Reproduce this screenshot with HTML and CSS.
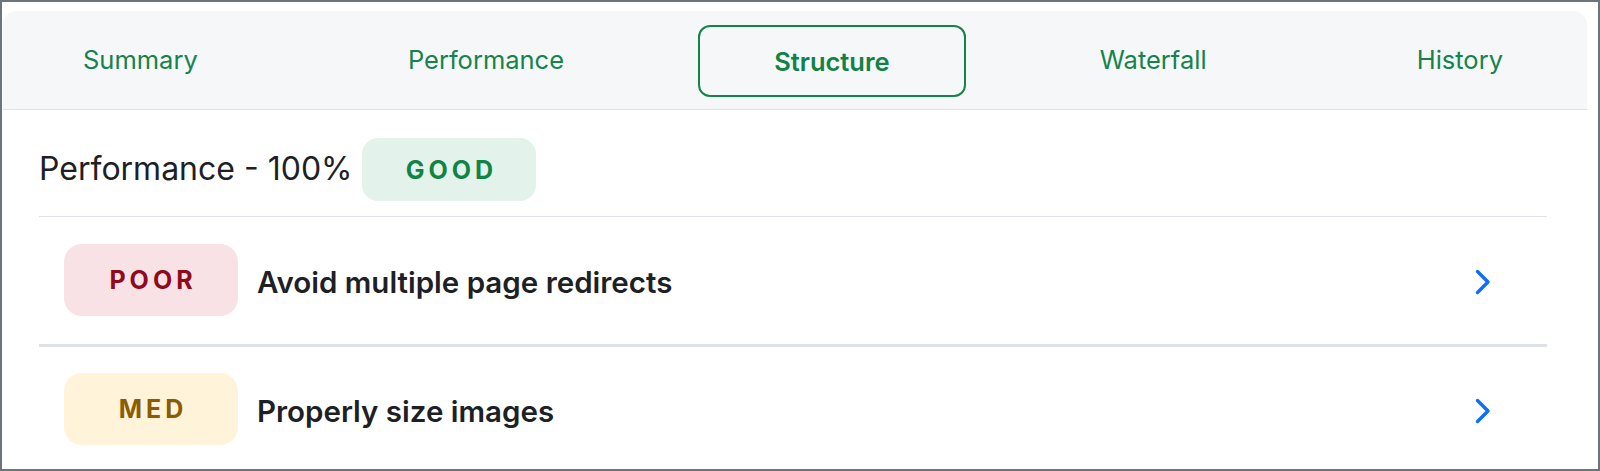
FILE: index.html
```html
<!DOCTYPE html>
<html lang="en">
<head>
<meta charset="utf-8">
<title>Structure</title>
<link rel="stylesheet" href="styles.css">
</head>
<body>
<div class="window">
  <nav class="tabs">
    <a class="tab">Summary</a>
    <a class="tab">Performance</a>
    <a class="tab active">Structure</a>
    <a class="tab">Waterfall</a>
    <a class="tab">History</a>
  </nav>
  <section class="content">
    <div class="heading">
      <h2 class="heading-title">Performance - 100%</h2>
      <span class="badge badge-good badge-small">GOOD</span>
    </div>
    <div class="row row-divided">
      <span class="badge badge-poor">POOR</span>
      <span class="row-title">Avoid multiple page redirects</span>
      <svg class="chevron" viewBox="0 0 16 26" width="16" height="26" aria-hidden="true"><polyline points="2.5,2.5 13,13 2.5,23.5" fill="none" stroke="#0d6efd" stroke-width="3.4" stroke-linecap="round" stroke-linejoin="round"/></svg>
    </div>
    <div class="row">
      <span class="badge badge-med">MED</span>
      <span class="row-title">Properly size images</span>
      <svg class="chevron" viewBox="0 0 16 26" width="16" height="26" aria-hidden="true"><polyline points="2.5,2.5 13,13 2.5,23.5" fill="none" stroke="#0d6efd" stroke-width="3.4" stroke-linecap="round" stroke-linejoin="round"/></svg>
    </div>
  </section>
</div>
</body>
</html>
```
FILE: styles.css
```css
* { box-sizing: border-box; }
html, body { margin: 0; padding: 0; background: #ffffff; }
body {
  font-family: Inter, "Noto Sans", "Liberation Sans", sans-serif;
  color: #1e2226;
}
.window {
  width: 1600px;
  height: 471px;
  border: 2px solid #6d747c;
  padding: 9px 11px 0 1px;
  overflow: hidden;
  background: #ffffff;
}
.tabs {
  display: flex;
  justify-content: space-between;
  align-items: flex-start;
  height: 99px;
  padding: 14px 8px 0 4px;
  background: #f6f7f9;
  border-bottom: 1px solid #dee2e6;
  border-radius: 14px 14px 0 0;
}
.tab {
  display: flex;
  align-items: center;
  justify-content: center;
  height: 72px;
  padding: 0 74px 3px 74px;
  border: 2px solid transparent;
  border-radius: 12px;
  color: #14834c;
  font-size: 25.5px;
  font-weight: 400;
  text-decoration: none;
}
.tab.active {
  border-color: #128548;
  font-weight: 600;
  color: #118247;
  padding-bottom: 0;
}
.content {
  padding: 0 40px 0 36px;
}
.heading {
  display: flex;
  align-items: center;
  gap: 10px;
  padding: 28px 0 15px 0;
  border-bottom: 1px solid #dee2e6;
}
.heading-title {
  margin: 0;
  font-size: 32px;
  font-weight: 400;
  line-height: 1.2;
  color: #1d2125;
}
.badge {
  display: flex;
  align-items: center;
  justify-content: center;
  width: 174px;
  height: 72px;
  border-radius: 18px;
  font-size: 25px;
  font-weight: 700;
  letter-spacing: 4px;
  padding-left: 4px;
}
.badge-small {
  height: 63px;
  border-radius: 16px;
}
.badge-good { background: #e3f3eb; color: #0f8444; }
.badge-poor { background: #f8e2e6; color: #8e0a1c; }
.badge-med { background: #fff3d9; color: #8a5b00; }
.row {
  display: flex;
  align-items: center;
  gap: 19px;
  padding: 27px 56px 28px 25px;
}
.row + .row { padding-top: 26px; }
.row-divided {
  border-bottom: 3px solid #dee2e6;
}
.row-title {
  flex: 1;
  padding-top: 4px;
  font-size: 29.5px;
  font-weight: 600;
  color: #1d2125;
}
.chevron {
  flex: none;
  display: block;
  margin-top: 4px;
}
```
